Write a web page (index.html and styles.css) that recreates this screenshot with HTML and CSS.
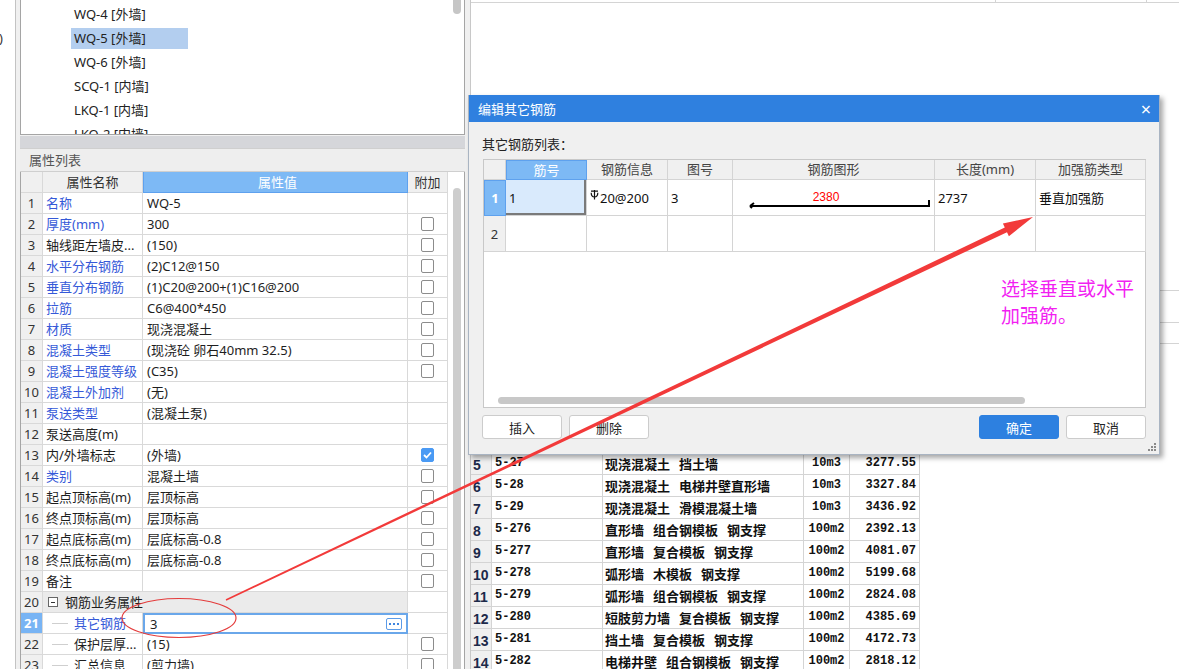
FILE: index.html
```html
<!DOCTYPE html>
<html lang="zh-CN">
<head>
<meta charset="utf-8">
<title>编辑其它钢筋</title>
<link rel="stylesheet" href="styles.css">
</head>
<body>
<div class="app">
  <div class="edge"><span class="edge-txt">)</span></div>
  <div class="left">
    <div class="tree">
      <div class="tree-list">
        <div class="tree-item"><span>WQ-4 [外墙]</span></div>
        <div class="tree-item sel"><span>WQ-5 [外墙]</span></div>
        <div class="tree-item"><span>WQ-6 [外墙]</span></div>
        <div class="tree-item"><span>SCQ-1 [内墙]</span></div>
        <div class="tree-item"><span>LKQ-1 [内墙]</span></div>
        <div class="tree-item"><span>LKQ-2 [内墙]</span></div>
      </div>
      <div class="tree-scroll"><div class="tthumb"></div></div>
    </div>
    <div class="band"></div>
    <div class="prop-title">属性列表</div>
    <div class="prop-wrap">
      <div class="ptable">
        <div class="prow head"><div class="c num"></div><div class="c name hc">属性名称</div><div class="c val hv">属性值</div><div class="c add hc">附加</div></div>
        <div class="prow"><div class="c num">1</div><div class="c name blue">名称</div><div class="c val">WQ-5</div><div class="c add"></div></div>
        <div class="prow"><div class="c num">2</div><div class="c name blue">厚度(mm)</div><div class="c val">300</div><div class="c add"><span class="cb"></span></div></div>
        <div class="prow"><div class="c num">3</div><div class="c name">轴线距左墙皮...</div><div class="c val">(150)</div><div class="c add"><span class="cb"></span></div></div>
        <div class="prow"><div class="c num">4</div><div class="c name blue">水平分布钢筋</div><div class="c val">(2)C12@150</div><div class="c add"><span class="cb"></span></div></div>
        <div class="prow"><div class="c num">5</div><div class="c name blue">垂直分布钢筋</div><div class="c val">(1)C20@200+(1)C16@200</div><div class="c add"><span class="cb"></span></div></div>
        <div class="prow"><div class="c num">6</div><div class="c name blue">拉筋</div><div class="c val">C6@400*450</div><div class="c add"><span class="cb"></span></div></div>
        <div class="prow"><div class="c num">7</div><div class="c name blue">材质</div><div class="c val">现浇混凝土</div><div class="c add"><span class="cb"></span></div></div>
        <div class="prow"><div class="c num">8</div><div class="c name blue">混凝土类型</div><div class="c val">(现浇砼 卵石40mm 32.5)</div><div class="c add"><span class="cb"></span></div></div>
        <div class="prow"><div class="c num">9</div><div class="c name blue">混凝土强度等级</div><div class="c val">(C35)</div><div class="c add"><span class="cb"></span></div></div>
        <div class="prow"><div class="c num">10</div><div class="c name blue">混凝土外加剂</div><div class="c val">(无)</div><div class="c add"></div></div>
        <div class="prow"><div class="c num">11</div><div class="c name blue">泵送类型</div><div class="c val">(混凝土泵)</div><div class="c add"></div></div>
        <div class="prow"><div class="c num">12</div><div class="c name">泵送高度(m)</div><div class="c val"></div><div class="c add"></div></div>
        <div class="prow"><div class="c num">13</div><div class="c name">内/外墙标志</div><div class="c val">(外墙)</div><div class="c add"><span class="cb on"><svg width="9" height="8" viewBox="0 0 9 8"><path d="M1 4 L3.5 6.5 L8 1.5" fill="none" stroke="#fff" stroke-width="1.8"/></svg></span></div></div>
        <div class="prow"><div class="c num">14</div><div class="c name blue">类别</div><div class="c val">混凝土墙</div><div class="c add"><span class="cb"></span></div></div>
        <div class="prow"><div class="c num">15</div><div class="c name">起点顶标高(m)</div><div class="c val">层顶标高</div><div class="c add"><span class="cb"></span></div></div>
        <div class="prow"><div class="c num">16</div><div class="c name">终点顶标高(m)</div><div class="c val">层顶标高</div><div class="c add"><span class="cb"></span></div></div>
        <div class="prow"><div class="c num">17</div><div class="c name">起点底标高(m)</div><div class="c val">层底标高-0.8</div><div class="c add"><span class="cb"></span></div></div>
        <div class="prow"><div class="c num">18</div><div class="c name">终点底标高(m)</div><div class="c val">层底标高-0.8</div><div class="c add"><span class="cb"></span></div></div>
        <div class="prow"><div class="c num">19</div><div class="c name">备注</div><div class="c val"></div><div class="c add"><span class="cb"></span></div></div>
        <div class="prow"><div class="c num">20</div><div class="c group"><span class="minus"></span>钢筋业务属性</div><div class="c add"></div></div>
        <div class="prow"><div class="c num act">21</div><div class="c name sub blue"><span class="tline"></span>其它钢筋</div><div class="c val edit"><span>3</span><span class="more"><i></i><i></i><i></i></span></div><div class="c add"></div></div>
        <div class="prow"><div class="c num">22</div><div class="c name sub"><span class="tline"></span>保护层厚...</div><div class="c val">(15)</div><div class="c add"><span class="cb"></span></div></div>
        <div class="prow"><div class="c num">23</div><div class="c name sub"><span class="tline"></span>汇总信息</div><div class="c val">(剪力墙)</div><div class="c add"><span class="cb"></span></div></div>
      </div>
      <div class="pscroll"><div class="pthumb"></div></div>
    </div>
  </div>
  <div class="splitter"></div>
  <div class="right">
    <div class="rtop"><div class="rt1"></div><div class="rt2"></div><div class="rt3"></div></div>
    <div class="rmid">
      <div class="ghost"><div class="g1"></div><div class="g2"></div><div class="g3"></div></div>
    </div>
    <div class="btable">
      <div class="brow"><div class="bn">5</div><div class="bc">5-27</div><div class="bm">现浇混凝土 挡土墙</div><div class="bu">10m3</div><div class="bp">3277.55</div></div>
      <div class="brow"><div class="bn">6</div><div class="bc">5-28</div><div class="bm">现浇混凝土 电梯井壁直形墙</div><div class="bu">10m3</div><div class="bp">3327.84</div></div>
      <div class="brow"><div class="bn">7</div><div class="bc">5-29</div><div class="bm">现浇混凝土 滑模混凝土墙</div><div class="bu">10m3</div><div class="bp">3436.92</div></div>
      <div class="brow"><div class="bn">8</div><div class="bc">5-276</div><div class="bm">直形墙 组合钢模板 钢支撑</div><div class="bu">100m2</div><div class="bp">2392.13</div></div>
      <div class="brow"><div class="bn">9</div><div class="bc">5-277</div><div class="bm">直形墙 复合模板 钢支撑</div><div class="bu">100m2</div><div class="bp">4081.07</div></div>
      <div class="brow"><div class="bn">10</div><div class="bc">5-278</div><div class="bm">弧形墙 木模板 钢支撑</div><div class="bu">100m2</div><div class="bp">5199.68</div></div>
      <div class="brow"><div class="bn">11</div><div class="bc">5-279</div><div class="bm">弧形墙 组合钢模板 钢支撑</div><div class="bu">100m2</div><div class="bp">2824.08</div></div>
      <div class="brow"><div class="bn">12</div><div class="bc">5-280</div><div class="bm">短肢剪力墙 复合模板 钢支撑</div><div class="bu">100m2</div><div class="bp">4385.69</div></div>
      <div class="brow"><div class="bn">13</div><div class="bc">5-281</div><div class="bm">挡土墙 复合模板 钢支撑</div><div class="bu">100m2</div><div class="bp">4172.73</div></div>
      <div class="brow"><div class="bn">14</div><div class="bc">5-282</div><div class="bm">电梯井壁 组合钢模板 钢支撑</div><div class="bu">100m2</div><div class="bp">2818.12</div></div>
    </div>
  </div>
</div>

<div class="dialog">
  <div class="dlg-title"><span>编辑其它钢筋</span><span class="dlg-close">×</span></div>
  <div class="dlg-body">
    <div class="dlg-label">其它钢筋列表：</div>
    <div class="dlg-table">
      <div class="dgrid">
        <div class="dh"></div>
        <div class="dh act">筋号</div>
        <div class="dh">钢筋信息</div>
        <div class="dh">图号</div>
        <div class="dh">钢筋图形</div>
        <div class="dh">长度(mm)</div>
        <div class="dh">加强筋类型</div>
        <div class="dn act">1</div>
        <div class="dc sel">1</div>
        <div class="dc"><svg class="grade" width="9" height="10" viewBox="0 0 9 10"><path d="M1 1.2 H8 M4.5 0 V9.5 M1.2 2.8 Q1.2 7 4.5 7 Q7.8 7 7.8 2.8" fill="none" stroke="#111" stroke-width="1.2"/></svg>20@200</div>
        <div class="dc">3</div>
        <div class="dc shape"><svg width="201" height="35" viewBox="0 0 201 35"><path d="M196 20 V26 H17 M17 26 L21 23 M17 26 L19 28" fill="none" stroke="#000" stroke-width="2"/><text x="93" y="21" text-anchor="middle" class="dim">2380</text></svg></div>
        <div class="dc">2737</div>
        <div class="dc">垂直加强筋</div>
        <div class="dn">2</div>
        <div class="dc"></div>
        <div class="dc"></div>
        <div class="dc"></div>
        <div class="dc"></div>
        <div class="dc"></div>
        <div class="dc"></div>
      </div>
      <div class="dfill"></div>
      <div class="hscroll"></div>
      <div class="note">选择垂直或水平<br>加强筋。</div>
    </div>
    <div class="dlg-btns">
      <button class="btn">插入</button>
      <button class="btn">删除</button>
      <span class="btn-gap"></span>
      <button class="btn primary">确定</button>
      <button class="btn">取消</button>
    </div>
  </div>
  <svg class="grip" width="8" height="8" viewBox="0 0 8 8"><g fill="#8a8a8a"><rect x="6" y="0" width="2" height="2"/><rect x="3" y="3" width="2" height="2"/><rect x="6" y="3" width="2" height="2"/><rect x="0" y="6" width="2" height="2"/><rect x="3" y="6" width="2" height="2"/><rect x="6" y="6" width="2" height="2"/></g></svg>
</div>

<svg class="annot" width="1179" height="669" viewBox="0 0 1179 669">
  <ellipse cx="179" cy="618" rx="57" ry="19.5" fill="none" stroke="#e43c3c" stroke-width="1.2"/>
  <polygon points="225.7,599.3 1004.8,227.6 1002.9,223.6 1033,217 1008.9,236.2 1007,232.2 226.3,600.7" fill="#f23a3a"/>
</svg>
</body>
</html>
```
FILE: styles.css
```css
* { box-sizing: border-box; }
html, body { margin: 0; padding: 0; }
body {
  width: 1179px; height: 669px; overflow: hidden; position: relative;
  background: #fff;
  font-family: "Noto Sans", "Noto Sans CJK SC", sans-serif;
  font-size: 13px; color: #1e1e1e;
}
.app { display: flex; height: 669px; }

.edge { width: 16px; border-right: 1px solid #c3c3c3; background: #fff; }
.edge-txt { display: block; margin: 29px 0 0 -1px; line-height: 18px; color: #333; }

.left { width: 449px; background: #f0f0f0; padding-left: 4px; display: flex; flex-direction: column; }
.tree { height: 135px; flex-shrink: 0; background: #fff; border: 1px solid #a5a5a5; border-top: none; display: flex; overflow: hidden; }
.tree-list { flex: 1; padding: 3px 0 0 50px; }
.tree-item { height: 24px; padding-top: 1px; white-space: nowrap; }
.tree-item span { display: inline-block; height: 21px; line-height: 21px; padding: 0 3px; color: #222; }
.tree-item.sel span { background: #b3ceef; width: 117px; }
.tree-scroll { width: 11px; }
.tthumb { width: 8px; height: 14px; background: #c6c6c6; border-radius: 0 0 4px 4px; }

.band { height: 12px; flex-shrink: 0; margin-top: 1px; background: #d5d6da; }
.prop-title { height: 24px; flex-shrink: 0; line-height: 22px; background: #eeeeee; border-top: 1px solid #cfcfcf; border-bottom: 1px solid #cfcfcf; padding-left: 9px; color: #555; }

.prop-wrap { flex: 1; display: flex; border-left: 1px solid #a5a5a5; overflow: hidden; }
.ptable { width: 427px; background: #fff; }
.prow { display: flex; height: 21px; }
.c { height: 21px; line-height: 20px; border-right: 1px solid #d9d9d9; border-bottom: 1px solid #d9d9d9; white-space: nowrap; overflow: hidden; }
.c.num { width: 22px; background: #f0f0f0; text-align: center; color: #333; }
.c.num.act { background: #78b4f4; color: #fff; font-weight: bold; }
.c.name { width: 100px; padding-left: 3px; }
.c.val { width: 265px; padding-left: 4px; }
.c.add { width: 40px; display: flex; align-items: center; justify-content: center; }
.prow.head .c { background: #f0f0f0; text-align: center; color: #333; }
.prow.head .c.hv { background: #7db9f5; color: #fff; border: 1px solid #5ea1ee; border-top: none; }
.prow.head .c.hc { padding-left: 0; }
.blue { color: #3559d8; }
.c.group { width: 365px; background: #ebebeb; display: flex; align-items: center; padding-left: 5px; }
.minus { width: 10px; height: 10px; border: 1px solid #666; margin-right: 7px; position: relative; background: #fff; }
.minus::after { content: ""; position: absolute; left: 2px; right: 2px; top: 3.5px; height: 1px; background: #333; }
.c.name.sub { display: flex; align-items: center; padding-left: 9px; }
.tline { width: 16px; height: 1px; background: #cfcfcf; margin-right: 6px; }
.c.val.edit { border: 2px solid #6aa7ea; display: flex; align-items: center; justify-content: space-between; padding: 0 4px 0 5px; }
.more { width: 16px; height: 12px; border: 1px solid #5b9be8; border-radius: 2px; display: flex; align-items: center; justify-content: center; gap: 2px; background: #fff; }
.more i { width: 2px; height: 2px; background: #3f86e0; }
.cb { width: 13px; height: 14px; border: 1px solid #8c8c8c; border-radius: 2px; background: #fff; display: flex; align-items: center; justify-content: center; }
.cb.on { background: #4a9af4; border-color: #4a9af4; }

.pscroll { flex: 1; background: #fff; border-right: 1px solid #a5a5a5; padding-left: 5px; }
.pthumb { width: 8px; height: 600px; margin-top: 16px; background: #cdcdcd; border-radius: 4px 4px 0 0; }

.splitter { width: 5px; background: #f0f0f0; }
.right { flex: 1; border-left: 1px solid #c8c8c8; background: #fff; display: flex; flex-direction: column; overflow: hidden; }
.rtop { height: 3px; flex-shrink: 0; border-bottom: 1px solid #d4d4d4; display: flex; }
.rt1 { width: 525px; border-right: 1px solid #d4d4d4; }
.rt2 { width: 151px; border-right: 1px solid #d4d4d4; }
.rmid { height: 450px; flex-shrink: 0; padding-top: 287px; }
.ghost { margin-left: auto; width: 180px; }
.g1 { height: 32px; border-top: 1px solid #d4d4d4; }
.g2 { height: 21px; border-top: 1px solid #d4d4d4; }
.g3 { height: 1px; border-top: 1px solid #d4d4d4; }

.btable { width: 450px; flex-shrink: 0; }
.brow { display: flex; height: 22px; }
.brow > div { height: 22px; border-right: 1px solid #d4d4d4; border-bottom: 1px solid #d4d4d4; white-space: nowrap; font-weight: bold; color: #111; }
.bn { width: 21px; background: #f0f0f0; font-family: "Liberation Sans", sans-serif; font-size: 14px; line-height: 24px; padding-left: 2px; }
.brow > .bn { color: #1d2a4a; }
.bc { width: 111px; font-family: "Liberation Mono", monospace; font-size: 12px; line-height: 20px; padding-left: 3px; }
.bm { width: 201px; font-family: "Noto Sans CJK SC", sans-serif; font-size: 13px; line-height: 21px; padding-left: 2px; word-spacing: 6px; }
.bu { width: 46px; font-family: "Liberation Mono", monospace; font-size: 12px; line-height: 20px; text-align: center; }
.bp { width: 70px; font-family: "Liberation Mono", monospace; font-size: 12px; line-height: 20px; text-align: right; padding-right: 3px; }

.dialog {
  position: absolute; left: 468px; top: 95px; width: 692px; height: 360px;
  background: #f0f0f0; border: 1px solid #a9b4c2; border-top: none;
  box-shadow: 3px 3px 5px rgba(0,0,0,0.35);
  display: flex; flex-direction: column;
}
.dlg-title { height: 27px; background: #2f80df; color: #fff; display: flex; align-items: center; justify-content: space-between; padding: 0 8px 0 9px; }
.dlg-close { font-size: 18px; line-height: 18px; }
.dlg-body { flex: 1; padding: 0 13px; display: flex; flex-direction: column; }
.dlg-label { margin-top: 14px; height: 16px; line-height: 16px; color: #222; }
.dlg-table { position: relative; margin: 7px 0 0 1px; width: 663px; height: 249px; background: #fff; border: 1px solid #c8c8c8; display: flex; flex-direction: column; }
.dgrid { display: grid; grid-template-columns: 22px 81px 81px 65px 202px 101px 110px; grid-template-rows: 20px 36px 36px; }
.dh { background: #f0f0f0; border-right: 1px solid #d4d4d4; border-bottom: 1px solid #d4d4d4; text-align: center; line-height: 19px; color: #444; }
.dh.act { background: #7db9f5; color: #fff; border: 1px solid #5ea1ee; }
.dn { background: #f0f0f0; border-right: 1px solid #d4d4d4; border-bottom: 1px solid #d4d4d4; display: flex; align-items: center; justify-content: center; color: #333; }
.dn.act { background: #7db9f5; color: #fff; font-weight: bold; border: 1px solid #5ea1ee; }
.dc { border-right: 1px solid #d4d4d4; border-bottom: 1px solid #d4d4d4; display: flex; align-items: center; padding-left: 3px; color: #111; white-space: nowrap; }
.dc.sel { background: #d9eafc; box-shadow: inset -2px -2px 0 #7a7a7a; }
.dc.shape { padding-left: 0; }
.grade { margin: 0 1px 6px 0; }
.dim { font-family: "Liberation Sans", sans-serif; font-size: 12px; fill: #ff0000; }
.dfill { flex: 1; }
.hscroll { width: 527px; height: 7px; margin: 0 0 3px 14px; background: #c8c8c8; border-radius: 4px; }
.note { position: absolute; left: 517px; top: 116px; color: #f21ff2; font-size: 19px; line-height: 27px; }

.dlg-btns { margin-top: 7px; display: flex; gap: 7px; }
.btn { width: 80px; height: 24px; background: #fff; border: 1px solid #cccccc; border-radius: 3px; font-family: "Noto Sans CJK SC", sans-serif; font-size: 13px; color: #222; padding: 0; }
.btn.primary { background: #2d80e0; border-color: #2d80e0; color: #fff; }
.btn-gap { flex: 1; }
.grip { position: absolute; right: 3px; bottom: 3px; }

.annot { position: absolute; left: 0; top: 0; pointer-events: none; z-index: 10; }
```
